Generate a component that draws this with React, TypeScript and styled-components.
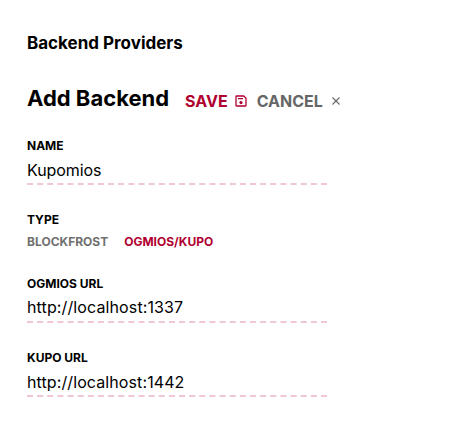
import React from "react";
import styled, { createGlobalStyle } from "styled-components";

const Global = createGlobalStyle`
  * { box-sizing: border-box; }
  body { margin: 0; background: #fff; color: #000; font-family: Inter, "Liberation Sans", sans-serif; }
`;
const Page = styled.main`padding: 31px 27px 0;`;
const SectionTitle = styled.h1`margin: 0; font-size: 17px; line-height: 24px; font-weight: 700;`;
const Header = styled.header`display: flex; align-items: baseline; margin-top: 27px; height: 32px;`;
const Title = styled.h2`margin: 0 16px 0 0; font-size: 22px; line-height: 32px; font-weight: 700;`;
const Action = styled.button<{ $primary?: boolean }>`
  display: flex; align-items: center; gap: 6px; margin: 0 9px 0 0; padding: 0; border: 0; background: none;
  transform: translateY(1px);
  font: 700 16px/24px Inter, sans-serif; color: ${p => (p.$primary ? "#b0002f" : "#666")};
`;
const Icon = styled.svg`display: block; width: 14px; height: 14px;`;
const Field = styled.div<{ $top: number }>`width: 300px; margin-top: ${p => p.$top}px;`;
const Label = styled.label`display: block; font-size: 12px; line-height: 16px; font-weight: 700;`;
const Input = styled.input<{ $tracking: number; $lift?: boolean }>`
  display: block; width: 300px; height: 31px; margin: 0; border: 0; outline: 0;
  padding: ${p => (p.$lift ? 0 : 2)}px 0 0; border-bottom: 2px dashed #efc8d1;
  background: none;
  font: 400 16px/24px Inter, sans-serif; color: #000;
  letter-spacing: ${p => p.$tracking}px;
`;
const Options = styled.div`display: flex; gap: 16px; margin-top: 6px;`;
const Option = styled.button<{ $active?: boolean }>`
  padding: 0; border: 0; background: none; font: 700 12px/16px Inter, sans-serif;
  color: ${p => (p.$active ? "#b0002f" : "#707070")};
`;

export default function App() {
  return (
    <Page>
      <Global />
      <SectionTitle>Backend Providers</SectionTitle>
      <Header>
        <Title>Add Backend</Title>
        <Action $primary>SAVE
          <Icon viewBox="0 0 14 14" fill="none" stroke="currentColor" strokeWidth="1.3">
            <path d="M2.5 2h7.2l2.3 2.3v7.2a.5.5 0 0 1-.5.5h-9a.5.5 0 0 1-.5-.5v-9a.5.5 0 0 1 .5-.5zM4 4.6h5" />
            <circle cx="7" cy="8.6" r="1.6" fill="currentColor" stroke="none" />
          </Icon>
        </Action>
        <Action>CANCEL
          <Icon viewBox="0 0 14 14" fill="none" stroke="currentColor" strokeWidth="1.1"><path d="M3.5 3.5l7 7M10.5 3.5l-7 7" /></Icon>
        </Action>
      </Header>
      <Field $top={24}><Label>NAME</Label><Input $tracking={-0.08} defaultValue="Kupomios" /></Field>
      <Field $top={27}>
        <Label>TYPE</Label>
        <Options><Option>BLOCKFROST</Option><Option $active>OGMIOS/KUPO</Option></Options>
      </Field>
      <Field $top={26}><Label>OGMIOS URL</Label><Input $tracking={0.12} $lift defaultValue="http://localhost:1337" /></Field>
      <Field $top={27}><Label>KUPO URL</Label><Input $tracking={0.1} defaultValue="http://localhost:1442" /></Field>
    </Page>
  );
}
